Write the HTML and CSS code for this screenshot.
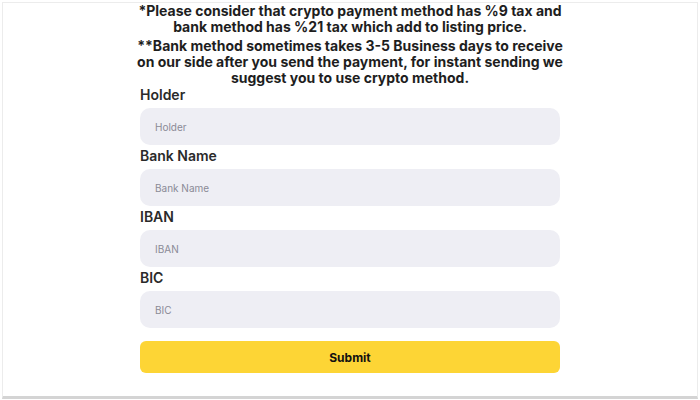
FILE: index.html
```html
<!DOCTYPE html>
<html lang="en">
<head>
  <meta charset="UTF-8">
  <title>Bank payment</title>
  <link rel="stylesheet" href="styles.css">
</head>
<body>

  <div class="frame">
    <div class="notes">
      <p>*Please consider that crypto payment method has %9 tax and bank method has %21 tax which add to listing price.</p>
      <p>**Bank method sometimes takes 3-5 Business days to receive on our side after you send the payment, for instant sending we suggest you to use crypto method.</p>
    </div>

    <form class="bank-form">
      <label class="field-label" for="holder">Holder</label>
      <input class="field" id="holder" type="text" placeholder="Holder">

      <label class="field-label" for="bank">Bank Name</label>
      <input class="field" id="bank" type="text" placeholder="Bank Name">

      <label class="field-label" for="iban">IBAN</label>
      <input class="field" id="iban" type="text" placeholder="IBAN">

      <label class="field-label" for="bic">BIC</label>
      <input class="field" id="bic" type="text" placeholder="BIC">

      <button class="submit" type="button">Submit</button>
    </form>
  </div>

</body>
</html>
```

FILE: styles.css
```css
body {
  margin: 0;
  background-color: #ffffff;
  font-family: Inter, 'Noto Sans', sans-serif;
  color: #222222;
}

.frame {
  margin: 2px;
  height: 393px;
  border: 1px solid #ececec;
  border-bottom: 3px solid #d4d4d4;
  overflow: hidden;
}

.notes {
  width: 440px;
  margin: 0 auto;
  text-align: center;
}

.notes p {
  margin: 0 0 3px;
  font-size: 14px;
  font-weight: 700;
  line-height: 16px;
  color: #1e1e1e;
}

.notes p:last-child {
  margin-bottom: 1px;
}

.bank-form {
  width: 420px;
  margin: 0 auto;
  display: flex;
  flex-direction: column;
}

.field-label {
  font-size: 14px;
  font-weight: 600;
  line-height: 16px;
  color: #2a2a2a;
  margin-bottom: 5px;
}

.field {
  height: 37px;
  margin-bottom: 3px;
  padding: 0 15px;
  border: none;
  border-radius: 10px;
  background-color: #eeeef4;
  font-family: inherit;
  font-size: 10px;
  color: #333333;
  outline: none;
}

.field::placeholder {
  color: #8a8a96;
}

.submit {
  margin-top: 10px;
  height: 32px;
  border: none;
  border-radius: 6px;
  background-color: #fdd535;
  font-family: inherit;
  font-size: 12px;
  font-weight: 700;
  color: #111111;
}
```
